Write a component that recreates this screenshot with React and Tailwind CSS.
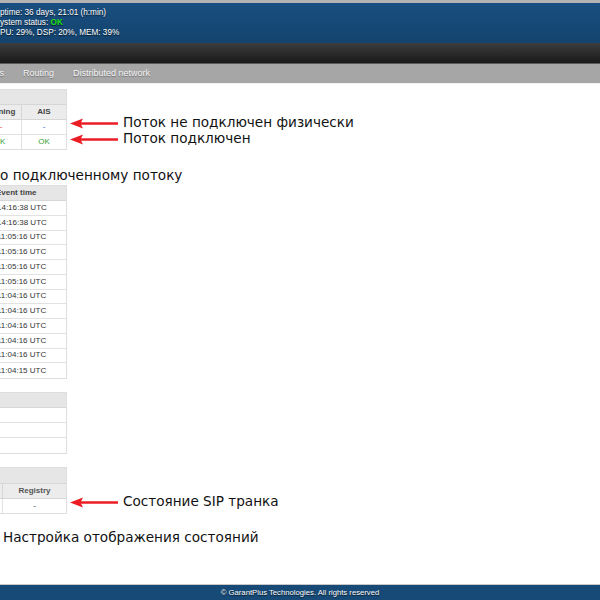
function Clip({ pre, children, className = "" }) {
  return (
    <div className={"flex whitespace-nowrap " + className}>
      <span className="flex w-0 shrink-0 justify-end">{pre}</span>
      <span>{children}</span>
    </div>
  );
}

function Arrow() {
  return (
    <svg width="48" height="16" viewBox="0 0 48 16" className="shrink-0">
      <line x1="9" y1="9.5" x2="48" y2="9.5" stroke="#ec1c24" strokeWidth="2.5" />
      <path d="M0 9.5 L13 4.5 L10.5 9.5 L13 14.5 Z" fill="#ec1c24" />
    </svg>
  );
}

function Note({ children }) {
  return (
    <div className="flex h-[16px] items-center gap-[5px] whitespace-nowrap">
      <Arrow />
      <span>{children}</span>
    </div>
  );
}

const events = [
  "14:16:38 UTC",
  "14:16:38 UTC",
  "11:05:16 UTC",
  "11:05:16 UTC",
  "11:05:16 UTC",
  "11:05:16 UTC",
  "11:04:16 UTC",
  "11:04:16 UTC",
  "11:04:16 UTC",
  "11:04:16 UTC",
  "11:04:16 UTC",
  "11:04:15 UTC",
];

export default function App() {
  return (
    <div className="flex h-screen w-full flex-col overflow-hidden bg-white font-['Liberation_Sans',Arial,sans-serif]">
      {/* header */}
      <div className="h-[3px] bg-[#b4b4b4]" />
      <div className="h-[40px] bg-gradient-to-b from-[#194f80] to-[#14436e] pt-[5px] text-[8.2px] leading-[10px] text-white [text-shadow:0_1px_1px_rgba(0,0,0,0.7)]">
        <Clip pre="U">ptime: 36 days, 21:01 (h:min)</Clip>
        <Clip pre="S">
          ystem status: <span className="font-bold text-[#1ee01e]">OK</span>
        </Clip>
        <Clip pre="C">PU: 29%, DSP: 20%, MEM: 39%</Clip>
      </div>
      <div className="h-[21px] border-b border-[#5a5a5a] bg-gradient-to-b from-[#3d3d3d] to-[#1a1a1a]" />
      <div className="flex h-[20px] items-center gap-[19px] border-b border-[#f2f2f2] bg-[#a6a6a6] text-[9px] text-[#f6f6f6] [text-shadow:0_1px_1px_rgba(0,0,0,0.35)]">
        <div className="flex w-[4px] shrink-0 justify-end whitespace-nowrap">Statistics</div>
        <div className="whitespace-nowrap">Routing</div>
        <div className="whitespace-nowrap">Distributed network</div>
      </div>

      {/* main */}
      <div className="flex min-h-0 flex-1 flex-col pt-[5px]">
        {/* table 1 */}
        <div className="flex items-start">
          <div className="ml-[-23px] w-[90px] shrink-0 border border-[#dedede] text-[8px] leading-none">
            <div className="h-[15px] border-b border-[#d6d6d6] bg-[#e6e6e6]" />
            <div className="grid h-[15px] grid-cols-[44px_44px] border-b border-[#d6d6d6] bg-[#ececec] font-bold text-[#444]">
              <div className="flex items-center justify-center border-r border-[#d6d6d6]">Warning</div>
              <div className="flex items-center justify-center">AIS</div>
            </div>
            <div className="grid h-[14.5px] grid-cols-[44px_44px] border-b border-[#e2e2e2]">
              <div className="flex items-center justify-center border-r border-[#e2e2e2] pl-[3px] text-[#e53935]">-</div>
              <div className="flex items-center justify-center text-[#3060c8]">-</div>
            </div>
            <div className="grid h-[14.5px] grid-cols-[44px_44px] text-[#34a034]">
              <div className="flex items-center justify-center border-r border-[#e2e2e2]">OK</div>
              <div className="flex items-center justify-center">OK</div>
            </div>
          </div>
          <div className="ml-[3px] mt-[25px] flex flex-col font-['DejaVu_Sans',sans-serif] text-[13.6px] text-[#111]">
            <Note>Поток не подключен физически</Note>
            <Note>Поток подключен</Note>
          </div>
        </div>

        {/* heading */}
        <Clip pre="Статистика п" className="mt-[16px] font-['DejaVu_Sans',sans-serif] text-[13.6px] leading-[18px] text-[#111]">
          о подключенному потоку
        </Clip>

        {/* table 2 */}
        <div className="ml-[-8px] mt-[1px] w-[75px] border border-[#dedede] text-[8px] leading-none text-[#333]">
          <div className="flex h-[15px] items-center whitespace-nowrap border-b border-[#d6d6d6] bg-[#e6e6e6] pl-[3px] font-bold text-[#444]">
            Event time
          </div>
          {events.map((t, i) => (
            <div
              key={i}
              className={
                "flex h-[14.75px] items-center whitespace-nowrap pl-[4px] " +
                (i < events.length - 1 ? "border-b border-[#e2e2e2]" : "")
              }
            >
              {t}
            </div>
          ))}
        </div>

        {/* table 3 */}
        <div className="ml-[-8px] mt-[13px] w-[75px] border border-[#dedede] text-[8px] leading-none">
          <div className="h-[15px] border-b border-[#d6d6d6] bg-[#e6e6e6]" />
          <div className="h-[15px] border-b border-[#e2e2e2]" />
          <div className="h-[15px] border-b border-[#e2e2e2]" />
          <div className="h-[15px]" />
        </div>

        {/* table 4 */}
        <div className="mt-[13px] flex items-start">
          <div className="ml-[-20px] w-[87px] shrink-0 border border-[#dedede] text-[8px] leading-none">
            <div className="h-[16px] border-b border-[#d6d6d6] bg-[#e6e6e6]" />
            <div className="grid h-[15px] grid-cols-[22px_63px] border-b border-[#d6d6d6] bg-[#ececec] font-bold text-[#555]">
              <div className="border-r border-[#d6d6d6]" />
              <div className="flex items-center justify-center">Registry</div>
            </div>
            <div className="grid h-[14px] grid-cols-[22px_63px] text-[#333]">
              <div className="border-r border-[#e2e2e2]" />
              <div className="flex items-center justify-center">-</div>
            </div>
          </div>
          <div className="ml-[3px] mt-[26px] flex flex-col font-['DejaVu_Sans',sans-serif] text-[13.6px] text-[#111]">
            <Note>Состояние SIP транка</Note>
          </div>
        </div>

        <div className="ml-[3px] mt-[14px] whitespace-nowrap font-['DejaVu_Sans',sans-serif] text-[13.6px] leading-[18px] text-[#111]">
          Настройка отображения состояний
        </div>
      </div>

      {/* footer */}
      <div className="h-[16px] border-t border-[#c8c8c8] bg-[#174a77] text-center text-[7.7px] leading-[15px] text-white [text-shadow:0_1px_1px_rgba(0,0,0,0.7)]">
        © GarantPlus Technologies. All rights reserved
      </div>
    </div>
  );
}
